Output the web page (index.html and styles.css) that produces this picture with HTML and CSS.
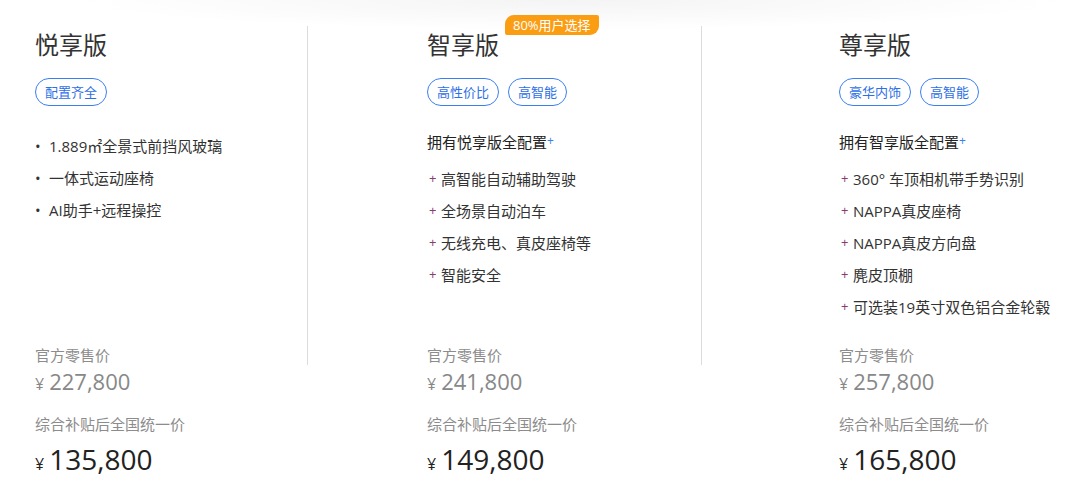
FILE: index.html
```html
<!DOCTYPE html>
<html lang="zh-CN">

<head>
  <meta charset="UTF-8" />
  <meta name="viewport" content="width=device-width, initial-scale=1.0" />
  <title>车型配置</title>
  <link rel="stylesheet" href="styles.css">
</head>

<body>
  <div class="plans">
    <div class="plan plan-1">
      <h2 class="plan-title">悦享版</h2>
      <div class="tags">
        <span class="tag">配置齐全</span>
      </div>
      <div class="features">
        <ul class="feat-list dots">
          <li>1.889㎡全景式前挡风玻璃</li>
          <li>一体式运动座椅</li>
          <li>AI助手+远程操控</li>
        </ul>
      </div>
      <div class="price-label">官方零售价</div>
      <div class="price-old"><span class="yen">¥</span>227,800</div>
      <div class="price-label second">综合补贴后全国统一价</div>
      <div class="price-now"><span class="yen">¥</span>135,800</div>
    </div>

    <div class="plan plan-2">
      <h2 class="plan-title">智享版<span class="badge">80%用户选择</span></h2>
      <div class="tags">
        <span class="tag">高性价比</span>
        <span class="tag">高智能</span>
      </div>
      <div class="features">
        <div class="feat-head">拥有悦享版全配置<span class="plus">+</span></div>
        <ul class="feat-list pluses">
          <li>高智能自动辅助驾驶</li>
          <li>全场景自动泊车</li>
          <li>无线充电、真皮座椅等</li>
          <li>智能安全</li>
        </ul>
      </div>
      <div class="price-label">官方零售价</div>
      <div class="price-old"><span class="yen">¥</span>241,800</div>
      <div class="price-label second">综合补贴后全国统一价</div>
      <div class="price-now"><span class="yen">¥</span>149,800</div>
    </div>

    <div class="plan plan-3">
      <h2 class="plan-title">尊享版</h2>
      <div class="tags">
        <span class="tag">豪华内饰</span>
        <span class="tag">高智能</span>
      </div>
      <div class="features">
        <div class="feat-head">拥有智享版全配置<span class="plus">+</span></div>
        <ul class="feat-list pluses">
          <li>360° 车顶相机带手势识别</li>
          <li>NAPPA真皮座椅</li>
          <li>NAPPA真皮方向盘</li>
          <li>麂皮顶棚</li>
          <li>可选装19英寸双色铝合金轮毂</li>
        </ul>
      </div>
      <div class="price-label">官方零售价</div>
      <div class="price-old"><span class="yen">¥</span>257,800</div>
      <div class="price-label second">综合补贴后全国统一价</div>
      <div class="price-now"><span class="yen">¥</span>165,800</div>
    </div>
  </div>
</body>

</html>
```

FILE: styles.css
```css
* {
  margin: 0;
  padding: 0;
  box-sizing: border-box;
}

html,
body {
  width: 100%;
  height: 100%;
}

body {
  font-family: "Open Sans", "Noto Sans CJK SC", sans-serif;
  color: #333;
  background: radial-gradient(ellipse 46% 30px at 53% 0, #f4f4f4, #fff) no-repeat;
  overflow: hidden;
}

.plans {
  display: grid;
  grid-template-columns: 308px 394px 1fr;
  padding-top: 26px;
}

.plan {
  display: flex;
  flex-direction: column;
  align-items: flex-start;
  padding-top: 3px;
}

/* divider only runs down to the first price */
.plan-1,
.plan-2 {
  background: linear-gradient(#dcdcdc, #dcdcdc) right top / 1px 339px no-repeat;
}

.plan-1 {
  padding-left: 35px;
}

.plan-2 {
  padding-left: 119px;
}

.plan-3 {
  padding-left: 137px;
}

.plan-title {
  position: relative;
  font-size: 24px;
  line-height: 32px;
  font-weight: 400;
  color: #333;
}

.badge {
  position: absolute;
  left: 78px;
  top: -14px;
  height: 20px;
  padding: 0 8px;
  line-height: 20px;
  font-size: 13px;
  color: #fff;
  white-space: nowrap;
  background: #fa9d13;
  border-radius: 9px 2px 9px 2px;
}

.tags {
  display: flex;
  gap: 9px;
  margin-top: 17px;
}

.tag {
  height: 28px;
  line-height: 26px;
  padding: 0 9px;
  font-size: 13px;
  color: #2d6fe6;
  border: 1px solid #3a7ff0;
  border-radius: 14px;
}

.features {
  height: 214px;
  margin-top: 24px;
}

.feat-head {
  font-size: 15px;
  line-height: 22px;
  color: #222;
  margin-bottom: 10px;
}

.feat-head .plus {
  font-size: 12px;
  color: #3a7ff0;
  vertical-align: 3px;
}

.feat-list {
  list-style: none;
}

.feat-list li {
  position: relative;
  padding-left: 14px;
  font-size: 15px;
  line-height: 32px;
  color: #333;
  white-space: nowrap;
}

.dots li::before {
  content: "•";
  position: absolute;
  left: 0;
  color: #333;
}

.pluses li::before {
  content: "+";
  position: absolute;
  left: 2px;
  top: 0;
  font-size: 13px;
  line-height: 30px;
  color: #8c3a6c;
}

.price-label {
  font-size: 15px;
  line-height: 22px;
  color: #8c8c8c;
}

.price-label.second {
  margin-top: 17px;
}

.price-old {
  font-size: 22px;
  line-height: 30px;
  color: #888;
  margin-top: 0;
}

.price-now {
  font-size: 28px;
  line-height: 36px;
  color: #222;
  margin-top: 6px;
}

.yen {
  font-size: 16px;
  line-height: 1;
  margin-right: 5px;
}
```
